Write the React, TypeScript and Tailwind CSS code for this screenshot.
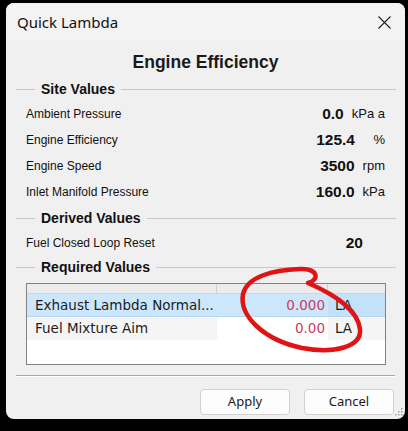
import React from 'react';

const ui = { fontFamily: '"Noto Sans", "Open Sans", sans-serif' };
const sans = { fontFamily: '"Liberation Sans", Arial, sans-serif' };
const grid = { fontFamily: '"DejaVu Sans", Verdana, sans-serif' };

function GroupHeader({ title }: { title: string }) {
  return (
    <div className="flex items-center h-[18px] pl-[10px] pr-[9px]">
      <div className="w-[19px] border-t border-[#c8c8c8]" />
      <span className="px-[6px] text-[14px] font-bold text-[#111]" style={sans}>
        {title}
      </span>
      <div className="flex-1 border-t border-[#c8c8c8]" />
    </div>
  );
}

function ValueRow({ label, value, unit }: { label: string; value: string; unit?: string }) {
  return (
    <div className="flex items-center h-[26px] pl-[20px] pr-[20px]" style={sans}>
      <span className="flex-1 text-[12px] text-[#111]">{label}</span>
      <span className="text-[15.5px] font-bold text-[#111]">{value}</span>
      {unit !== undefined ? (
        <span className="ml-[8px] min-w-[22px] text-right text-[13px] text-[#111]">{unit}</span>
      ) : (
        <span className="w-[22px]" />
      )}
    </div>
  );
}

export default function App() {
  const required = [
    { name: 'Exhaust Lambda Normal...', value: '0.000', unit: 'LA', selected: true },
    { name: 'Fuel Mixture Aim', value: '0.00', unit: 'LA', selected: false },
  ];

  return (
    <div className="relative w-[408px] h-[431px] bg-black pt-[3px] pl-[6px] overflow-hidden">
      <div className="relative w-[399px] h-[416px] bg-[#f0f0f0] rounded-[8px] overflow-hidden flex flex-col">
        {/* title bar */}
        <div className="h-[37px] bg-[#f3f3f3] flex items-center pl-[11px] pr-[14px]" style={ui}>
          <span className="flex-1 text-[15px] text-[#111] pt-[2px]">Quick Lambda</span>
          <svg width="13" height="13" viewBox="0 0 13 13" className="mt-[1px]">
            <path d="M0.5 0.5 L12.5 12.5 M12.5 0.5 L0.5 12.5" stroke="#222" strokeWidth="1.1" fill="none" />
          </svg>
        </div>

        <div className="h-[22px] mt-[11px] flex items-center justify-center text-[17.5px] font-bold text-[#1a1a1a]" style={sans}>
          Engine Efficiency
        </div>

        <div className="mt-[7px]">
          <GroupHeader title="Site Values" />
        </div>
        <div className="mt-[3px]">
          <ValueRow label="Ambient Pressure" value="0.0" unit="kPa a" />
          <ValueRow label="Engine Efficiency" value="125.4" unit="%" />
          <ValueRow label="Engine Speed" value="3500" unit="rpm" />
          <ValueRow label="Inlet Manifold Pressure" value="160.0" unit="kPa" />
        </div>

        <div className="mt-[4px]">
          <GroupHeader title="Derived Values" />
        </div>
        <div className="mt-[3px]">
          <ValueRow label="Fuel Closed Loop Reset" value="20" />
        </div>

        <div className="mt-[2px]">
          <GroupHeader title="Required Values" />
        </div>

        {/* grid */}
        <div className="mt-[7px] ml-[20px] w-[360px] h-[82px] border border-[#828282] bg-white flex flex-col" style={grid}>
          <div className="flex h-[10px] bg-[#ececec] border-b border-[#d2d2d2]">
            <div className="w-[190px] border-r border-[#d2d2d2]" />
            <div className="w-[111px] border-r border-[#d2d2d2]" />
            <div className="flex-1" />
          </div>
          {required.map((r) => (
            <div
              key={r.name}
              className={`flex h-[23px] items-center text-[13.5px] ${r.selected ? 'bg-[#cce6fb] border-b border-[#b6d6f2]' : 'bg-white'}`}
            >
              <div className={`w-[190px] h-full flex items-center pl-[8px] pr-[3px] ${r.selected ? '' : 'bg-[#f5f5f5]'}`}>
                <span className="truncate text-[#1c1c1c]">{r.name}</span>
              </div>
              <div className="w-[111px] h-full flex items-center justify-end pr-[3px] text-[#cc3a5c]">{r.value}</div>
              <div className={`flex-1 h-full flex items-center pl-[7px] text-[#1c1c1c] ${r.selected ? 'bg-[#c4e1fa]' : 'bg-[#f5f5f5]'}`}>
                {r.unit}
              </div>
            </div>
          ))}
        </div>

        <div className="mt-[10px] ml-[10px] mr-[10px] border-t border-[#a8a8a8] border-b border-b-white" />

        <div className="mt-[12px] flex justify-end gap-[14px] pr-[11px]" style={ui}>
          <button className="w-[90px] h-[26px] bg-[#fdfdfd] border border-[#d0d0d0] rounded-[4px] text-[13px] text-[#1a1a1a]">
            Apply
          </button>
          <button className="w-[90px] h-[26px] bg-[#fdfdfd] border border-[#d0d0d0] rounded-[4px] text-[13px] text-[#1a1a1a]">
            Cancel
          </button>
        </div>

        {/* resize grip */}
        <svg width="9" height="9" viewBox="0 0 9 9" className="absolute right-[2px] bottom-[3px]">
          {[
            [7, 1],
            [4, 4],
            [7, 4],
            [1, 7],
            [4, 7],
            [7, 7],
          ].map(([x, y]) => (
            <rect key={`${x}-${y}`} x={x} y={y} width="1.5" height="1.5" fill="#a0a0a0" />
          ))}
        </svg>
      </div>

      {/* red hand-drawn annotation */}
      <svg width="408" height="431" viewBox="0 0 408 431" className="absolute left-0 top-0 pointer-events-none">
        <path
          d="M308 283 C 320 280, 318 268, 300 269 C 272 270, 247 277, 243 294 C 239 316, 264 340, 302 348 C 334 354, 362 347, 360 329 C 358 311, 336 295, 308 283"
          stroke="#e01414"
          strokeWidth="4.5"
          strokeLinecap="round"
          fill="none"
        />
      </svg>
    </div>
  );
}
